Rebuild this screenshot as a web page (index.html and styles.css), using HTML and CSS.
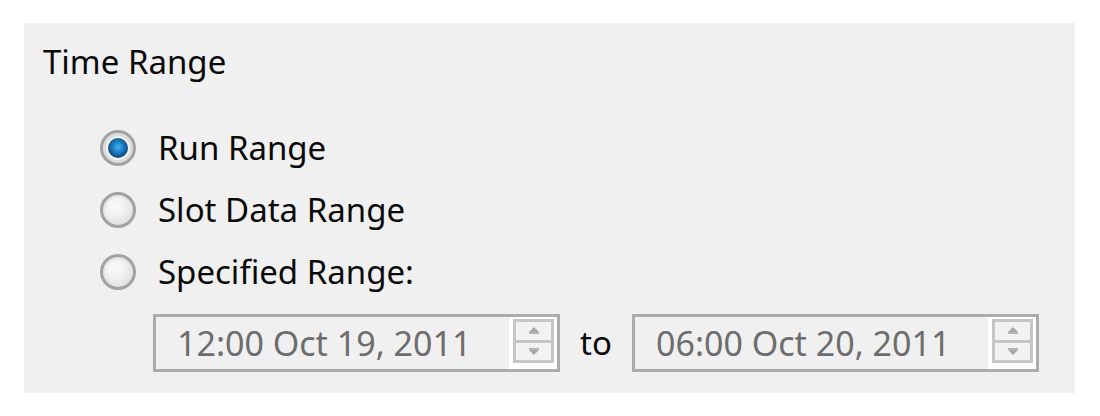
FILE: index.html
```html
<!DOCTYPE html>
<html>
<head>
<meta charset="utf-8">
<link rel="stylesheet" href="styles.css">
</head>
<body>
<div class="panel">
  <div class="title">Time Range</div>
  <div class="options">
    <div class="row"><span class="radio checked"><span class="dot"></span></span><span class="label">Run Range</span></div>
    <div class="row"><span class="radio"></span><span class="label">Slot Data Range</span></div>
    <div class="row"><span class="radio"></span><span class="label">Specified Range:</span></div>
  </div>
  <div class="range">
    <div class="field">
      <span class="value">12:00 Oct 19, 2011</span>
      <span class="spin">
        <span class="btn up"><svg width="14" height="8" viewBox="0 0 14 8"><path d="M7 0 L12 5 L2 5 Z" fill="#a8a8a8"/><rect x="2" y="5" width="10" height="2" fill="#b4b4b4"/></svg></span>
        <span class="btn down"><svg width="14" height="8" viewBox="0 0 14 8"><rect x="2" y="1" width="10" height="2" fill="#b4b4b4"/><path d="M2 3 L12 3 L7 8 Z" fill="#a8a8a8"/></svg></span>
      </span>
    </div>
    <span class="to">to</span>
    <div class="field">
      <span class="value">06:00 Oct 20, 2011</span>
      <span class="spin">
        <span class="btn up"><svg width="14" height="8" viewBox="0 0 14 8"><path d="M7 0 L12 5 L2 5 Z" fill="#a8a8a8"/><rect x="2" y="5" width="10" height="2" fill="#b4b4b4"/></svg></span>
        <span class="btn down"><svg width="14" height="8" viewBox="0 0 14 8"><rect x="2" y="1" width="10" height="2" fill="#b4b4b4"/><path d="M2 3 L12 3 L7 8 Z" fill="#a8a8a8"/></svg></span>
      </span>
    </div>
  </div>
</div>
</body>
</html>
```
FILE: styles.css
```css
html, body {
  margin: 0;
  padding: 0;
  background: #ffffff;
}
body {
  font-family: "Noto Sans", "Open Sans", sans-serif;
  font-size: 33px;
  color: #0a0a0a;
}
.panel {
  margin: 23px 0 0 24px;
  width: 1051px;
  height: 370px;
  background: #f0f0f0;
  padding: 19px 0 0 19px;
  box-sizing: border-box;
}
.title {
  height: 40px;
  line-height: 40px;
  white-space: nowrap;
}
.options {
  margin-top: 35px;
  padding-left: 57px;
}
.row {
  height: 62px;
  display: flex;
  align-items: center;
}
.radio {
  width: 36px;
  height: 36px;
  border-radius: 50%;
  box-sizing: border-box;
  border: 3px solid #a2a2a2;
  background: radial-gradient(circle at 40% 35%, #fbfbfb 0%, #eeeeee 45%, #d6d6d6 100%);
  box-shadow: inset 0 0 0 2px #e4e4e4;
  display: flex;
  align-items: center;
  justify-content: center;
  flex-shrink: 0;
}
.radio.checked {
  background: #f4f4f4;
  box-shadow: inset 0 0 0 3px #dcdcdc;
}
.dot {
  width: 20px;
  height: 20px;
  border-radius: 50%;
  background: radial-gradient(circle at 50% 45%, #49b4f2 0%, #1c82c8 35%, #0e4a7e 70%, #0a3556 100%);
}
.label {
  margin-left: 22px;
  line-height: 40px;
  white-space: nowrap;
}
.range {
  margin-top: 11px;
  padding-left: 110px;
  display: flex;
  align-items: center;
}
.field {
  width: 407px;
  height: 58px;
  box-sizing: border-box;
  border: 3px solid #acacac;
  display: flex;
  align-items: stretch;
  flex-shrink: 0;
}
.value {
  flex: 1;
  padding-left: 21px;
  font-size: 34px;
  line-height: 52px;
  color: #6d6d6d;
  white-space: nowrap;
}
.spin {
  width: 48px;
  background: #ffffff;
  padding: 2px 3px 6px 4px;
  box-sizing: border-box;
  display: flex;
  flex-direction: column;
}
.btn {
  flex: 1;
  border: 3px solid #c6c6c6;
  background: #f2f2f2;
  display: flex;
  align-items: center;
  justify-content: center;
}
.btn.down {
  border-top: 0;
}
.to {
  width: 72px;
  box-sizing: border-box;
  padding-left: 20px;
  line-height: 52px;
  white-space: nowrap;
  flex-shrink: 0;
}
```
